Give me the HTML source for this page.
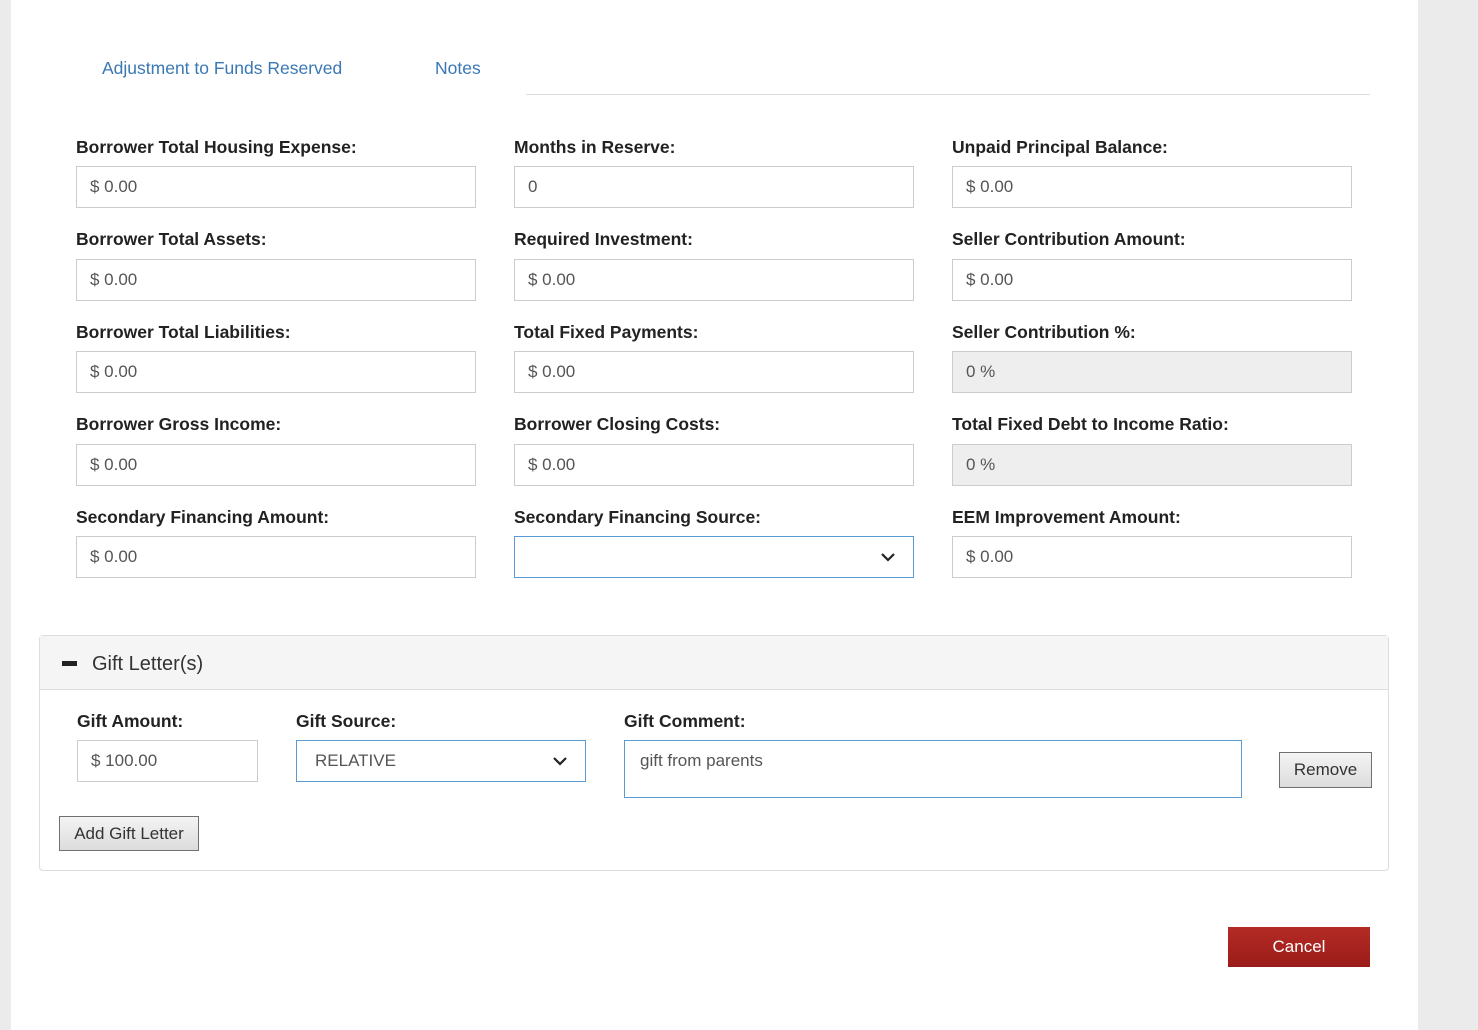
<!DOCTYPE html>
<html><head><style>
body{margin:0;width:1478px;height:1030px;background:#ebebeb;font-family:"Liberation Sans",sans-serif;position:relative;overflow:hidden}
.page{position:absolute;left:11px;top:0;width:1407px;height:1030px;background:#fff}
.a{position:absolute}
.lbl{position:absolute;font-weight:bold;font-size:17.5px;color:#222;line-height:20px;white-space:nowrap}
.inp{position:absolute;box-sizing:border-box;border:1px solid #ccc;background:#fff;font-size:17px;color:#555;padding-left:13px;line-height:40px}
.gray{background:#eee}
.blue{border-color:#5b9bd5}
.chev{position:absolute;right:18px;top:13px}
.btn{position:absolute;box-sizing:border-box;border:1px solid #707070;background:linear-gradient(#f4f4f4,#dcdcdc);font-size:17px;color:#333;text-align:center}
</style></head><body>
<div class="page"></div>
<div class="a" style="left:102px;top:58px;font-size:17.5px;color:#3a78b5">Adjustment to Funds Reserved</div>
<div class="a" style="left:435px;top:58px;font-size:17.5px;color:#3a78b5">Notes</div>
<div class="a" style="left:526px;top:94px;width:844px;height:1px;background:#ddd"></div>

<div class="lbl" style="left:76px;top:137px">Borrower Total Housing Expense:</div>
<div class="inp" style="left:76px;top:166px;width:400px;height:42px">$ 0.00</div>
<div class="lbl" style="left:514px;top:137px">Months in Reserve:</div>
<div class="inp" style="left:514px;top:166px;width:400px;height:42px">0</div>
<div class="lbl" style="left:952px;top:137px">Unpaid Principal Balance:</div>
<div class="inp" style="left:952px;top:166px;width:400px;height:42px">$ 0.00</div>

<div class="lbl" style="left:76px;top:229px">Borrower Total Assets:</div>
<div class="inp" style="left:76px;top:259px;width:400px;height:42px">$ 0.00</div>
<div class="lbl" style="left:514px;top:229px">Required Investment:</div>
<div class="inp" style="left:514px;top:259px;width:400px;height:42px">$ 0.00</div>
<div class="lbl" style="left:952px;top:229px">Seller Contribution Amount:</div>
<div class="inp" style="left:952px;top:259px;width:400px;height:42px">$ 0.00</div>

<div class="lbl" style="left:76px;top:322px">Borrower Total Liabilities:</div>
<div class="inp" style="left:76px;top:351px;width:400px;height:42px">$ 0.00</div>
<div class="lbl" style="left:514px;top:322px">Total Fixed Payments:</div>
<div class="inp" style="left:514px;top:351px;width:400px;height:42px">$ 0.00</div>
<div class="lbl" style="left:952px;top:322px">Seller Contribution %:</div>
<div class="inp gray" style="left:952px;top:351px;width:400px;height:42px">0 %</div>

<div class="lbl" style="left:76px;top:414px">Borrower Gross Income:</div>
<div class="inp" style="left:76px;top:444px;width:400px;height:42px">$ 0.00</div>
<div class="lbl" style="left:514px;top:414px">Borrower Closing Costs:</div>
<div class="inp" style="left:514px;top:444px;width:400px;height:42px">$ 0.00</div>
<div class="lbl" style="left:952px;top:414px">Total Fixed Debt to Income Ratio:</div>
<div class="inp gray" style="left:952px;top:444px;width:400px;height:42px">0 %</div>

<div class="lbl" style="left:76px;top:507px">Secondary Financing Amount:</div>
<div class="inp" style="left:76px;top:536px;width:400px;height:42px">$ 0.00</div>
<div class="lbl" style="left:514px;top:507px">Secondary Financing Source:</div>
<div class="inp blue" style="left:514px;top:536px;width:400px;height:42px"><svg class="chev" width="14" height="14" viewBox="0 0 14 14"><path d="M1 4l6 6 6-6" fill="none" stroke="#222" stroke-width="2.2"/></svg></div>
<div class="lbl" style="left:952px;top:507px">EEM Improvement Amount:</div>
<div class="inp" style="left:952px;top:536px;width:400px;height:42px">$ 0.00</div>

<div class="a" style="left:39px;top:635px;width:1350px;height:236px;border:1px solid #ddd;border-radius:4px;box-sizing:border-box"></div>
<div class="a" style="left:40px;top:636px;width:1348px;height:53px;background:#f5f5f5;border-bottom:1px solid #ddd"></div>
<div class="a" style="left:62px;top:661px;width:15px;height:5px;background:#222"></div>
<div class="a" style="left:92px;top:653px;font-size:20px;color:#333">Gift Letter(s)</div>

<div class="lbl" style="left:77px;top:711px">Gift Amount:</div>
<div class="inp" style="left:77px;top:740px;width:181px;height:42px">$ 100.00</div>
<div class="lbl" style="left:296px;top:711px">Gift Source:</div>
<div class="inp blue" style="left:296px;top:740px;width:290px;height:42px;padding-left:18px">RELATIVE<svg class="chev" width="14" height="14" viewBox="0 0 14 14" style="right:18px"><path d="M1 4l6 6 6-6" fill="none" stroke="#222" stroke-width="2.2"/></svg></div>
<div class="lbl" style="left:624px;top:711px">Gift Comment:</div>
<div class="inp blue" style="left:624px;top:740px;width:618px;height:58px;padding-left:15px;line-height:40px">gift from parents</div>
<div class="btn" style="left:1279px;top:752px;width:93px;height:36px;line-height:34px">Remove</div>
<div class="btn" style="left:59px;top:816px;width:140px;height:35px;line-height:33px">Add Gift Letter</div>

<div class="a" style="left:1228px;top:927px;width:142px;height:40px;background:linear-gradient(#b52b25,#9a1c19);color:#fff;font-size:17px;text-align:center;line-height:40px">Cancel</div>
</body></html>
